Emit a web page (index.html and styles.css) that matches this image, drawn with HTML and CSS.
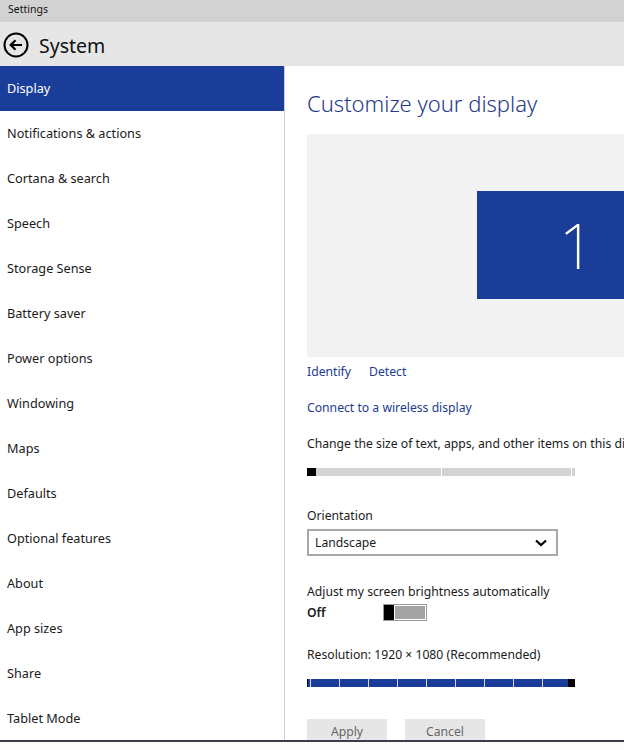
FILE: index.html
```html
<!DOCTYPE html>
<html>
<head>
<meta charset="utf-8">
<link rel="stylesheet" href="styles.css">
</head>
<body>
<div class="window">
  <div class="titlebar">Settings</div>
  <div class="header">
    <svg class="back" width="26" height="26" viewBox="0 0 26 26">
      <circle cx="13" cy="13" r="11.5" fill="none" stroke="#000" stroke-width="2"/>
      <path d="M19 13H8M12.5 8.2L7.7 13l4.8 4.8" fill="none" stroke="#000" stroke-width="2.2"/>
    </svg>
    <span class="title">System</span>
  </div>
  <div class="main">
    <nav class="sidebar">
      <div class="item active">Display</div>
      <div class="item">Notifications &amp; actions</div>
      <div class="item">Cortana &amp; search</div>
      <div class="item">Speech</div>
      <div class="item">Storage Sense</div>
      <div class="item">Battery saver</div>
      <div class="item">Power options</div>
      <div class="item">Windowing</div>
      <div class="item">Maps</div>
      <div class="item">Defaults</div>
      <div class="item">Optional features</div>
      <div class="item">About</div>
      <div class="item">App sizes</div>
      <div class="item">Share</div>
      <div class="item">Tablet Mode</div>
    </nav>
    <section class="content">
      <h1 class="heading">Customize your display</h1>
      <div class="preview">
        <div class="monitor">1</div>
      </div>
      <div class="links">
        <span class="link">Identify</span>
        <span class="link">Detect</span>
      </div>
      <div class="link wireless">Connect to a wireless display</div>
      <div class="label scale-label">Change the size of text, apps, and other items on this display: 100% (Recommended)</div>
      <div class="scale-slider">
        <div class="scale-thumb"></div>
        <div class="scale-track"></div>
        <div class="scale-tick"></div>
        <div class="scale-track"></div>
        <div class="scale-tick"></div>
        <div class="scale-end"></div>
      </div>
      <div class="label orient-label">Orientation</div>
      <div class="dropdown">
        <span>Landscape</span>
        <svg width="12" height="8" viewBox="0 0 12 8"><path d="M1 1.5l5 4.5 5-4.5" fill="none" stroke="#000" stroke-width="2.2"/></svg>
      </div>
      <div class="label bright-label">Adjust my screen brightness automatically</div>
      <div class="toggle-row">
        <span class="off">Off</span>
        <div class="toggle"><div class="toggle-thumb"></div><div class="toggle-fill"></div></div>
      </div>
      <div class="label res-label">Resolution: 1920 × 1080 (Recommended)</div>
      <div class="res-slider">
        <div class="res-seg first"></div>
        <div class="res-seg"></div>
        <div class="res-seg"></div>
        <div class="res-seg"></div>
        <div class="res-seg"></div>
        <div class="res-seg"></div>
        <div class="res-seg"></div>
        <div class="res-seg"></div>
        <div class="res-seg"></div>
        <div class="res-seg last"></div>
        <div class="res-thumb"></div>
      </div>
      <div class="buttons">
        <div class="btn">Apply</div>
        <div class="btn">Cancel</div>
      </div>
    </section>
  </div>
  <div class="bottom-line"></div>
</div>
</body>
</html>
```
FILE: styles.css
```css
* { box-sizing: border-box; }
html, body { margin: 0; padding: 0; }
body {
  width: 624px;
  height: 750px;
  overflow: hidden;
  background: #fbfbfb;
  font-family: "Segoe UI", "Noto Sans", "Open Sans", sans-serif;
  color: #1a1a1a;
}
.window { width: 624px; height: 750px; display: flex; flex-direction: column; }
.titlebar {
  height: 22px;
  background: #d2d2d2;
  font-size: 10.5px;
  line-height: 18px;
  padding-left: 8px;
  color: #111;
}
.header {
  height: 44px;
  background: #e6e6e6;
  display: flex;
  align-items: center;
  padding-left: 3px;
  padding-top: 3px;
}
.back { margin-right: 10px; margin-top: -1px; }
.title { font-size: 19.5px; color: #111; }
.main {
  height: 674px;
  display: flex;
  background: #fff;
  overflow: hidden;
}
.sidebar {
  width: 285px;
  flex: none;
  border-right: 1px solid #cfcfcf;
  background: #fff;
}
.item {
  height: 45px;
  line-height: 45px;
  padding-left: 7px;
  font-size: 12.7px;
  color: #1a1a1a;
  white-space: nowrap;
}
.item.active { background: #1b3d9a; color: #fff; width: 284px; }
.content {
  flex: 1;
  padding-left: 22px;
  overflow: hidden;
  min-width: 0;
  font-size: 12.2px;
}
.heading {
  margin: 22px 0 0 0;
  font-weight: 300;
  font-size: 22px;
  line-height: 30px;
  color: #25398a;
  white-space: nowrap;
}
.preview {
  margin-top: 16px;
  width: 400px;
  height: 223px;
  background: #f2f2f2;
  padding-top: 57px;
  padding-left: 170px;
}
.monitor {
  width: 220px;
  height: 108px;
  background: #1a3d98;
  color: #fff;
  font-size: 62px;
  font-weight: 200;
  line-height: 108px;
  padding-left: 82px;
}
.link { color: #213b8f; }
.links { margin-top: 5px; height: 20px; line-height: 20px; display: flex; gap: 18px; }
.wireless { margin-top: 16px; line-height: 20px; }
.label { white-space: nowrap; line-height: 20px; color: #1a1a1a; }
.scale-label { margin-top: 16px; }
.scale-slider {
  margin-top: 14px;
  width: 268px;
  height: 8px;
  display: flex;
  align-items: center;
}
.scale-thumb { width: 9px; height: 8px; background: #000; }
.scale-track { height: 8px; background: #d3d3d3; flex: 1; }
.scale-track:nth-child(2) { flex: none; width: 125px; }
.scale-tick { width: 1px; height: 8px; background: #fff; }
.scale-end { width: 3px; height: 8px; background: #d3d3d3; }
.orient-label { margin-top: 30px; }
.dropdown {
  margin-top: 3px;
  width: 251px;
  height: 27px;
  border: 2px solid #a8a8a8;
  display: flex;
  align-items: center;
  justify-content: space-between;
  padding: 0 9px 0 6px;
  color: #1a1a1a;
}
.bright-label { margin-top: 26px; }
.toggle-row { display: flex; align-items: center; height: 20px; margin-top: 0; }
.off { width: 76px; font-weight: 600; font-size: 12.2px; }
.toggle {
  width: 44px;
  height: 17px;
  border: 1px solid #9a9a9a;
  display: flex;
  background: #fff;
}
.toggle-thumb { width: 10px; height: 100%; background: #000; }
.toggle-fill { flex: 1; margin: 1px; background: #a3a3a3; }
.res-label { margin-top: 23px; }
.res-slider {
  margin-top: 14px;
  width: 268px;
  height: 8px;
  display: flex;
}
.res-seg { width: 29px; height: 8px; background: #1b3d9a; border-left: 1px solid #d6dcf0; }
.res-seg.first { width: 3px; border-left: 1px solid #000; }
.res-seg.last { width: 26px; }
.res-thumb { flex: 1; background: #000; }
.buttons { display: flex; gap: 18px; margin-top: 32px; }
.btn {
  width: 80px;
  height: 26px;
  background: #e6e6e6;
  color: #666;
  text-align: center;
  line-height: 26px;
  font-size: 12.2px;
}
.bottom-line { height: 2px; background: #3a3a48; }
```
